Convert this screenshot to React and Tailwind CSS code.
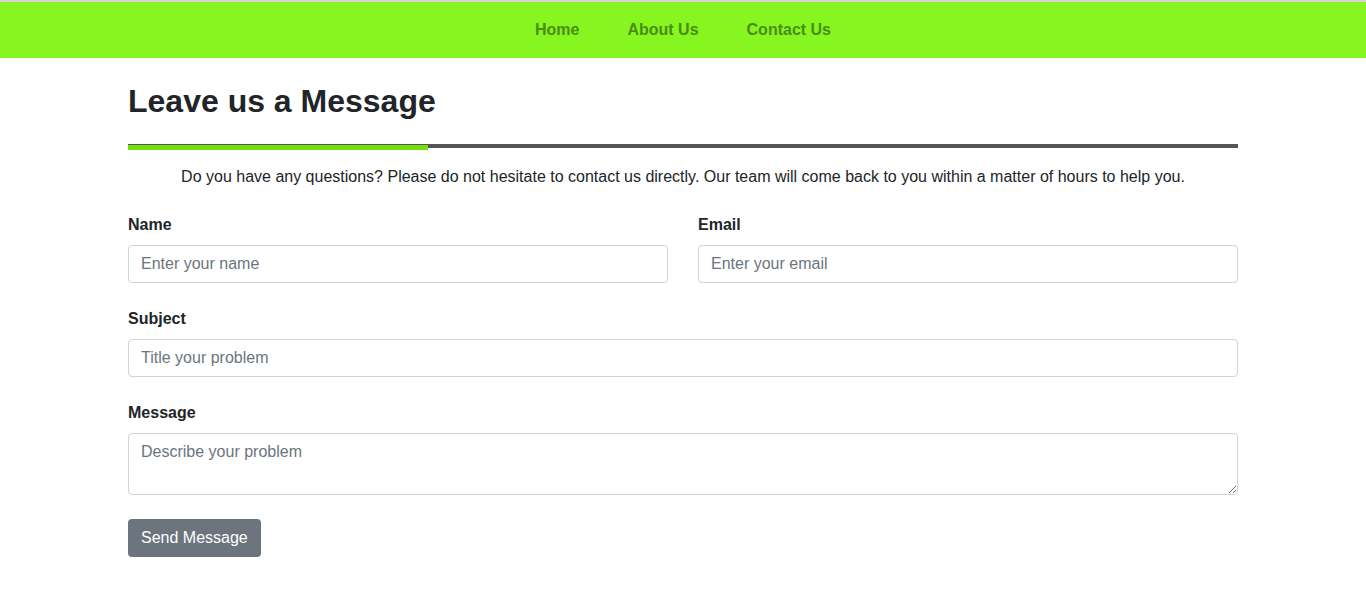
export default function App() {
  const font = { fontFamily: '"Liberation Sans", Arial, sans-serif' };
  return (
    <div className="min-h-[602px] bg-white text-[#212529]" style={font}>
      <div className="h-[2px] bg-[#d6d6d6]" />
      <nav className="h-[56px] bg-[#86f520] flex items-center justify-center">
        <a className="px-6 text-[16px] font-bold text-[#4b8c12]">Home</a>
        <a className="px-6 text-[16px] font-bold text-[#4b8c12]">About Us</a>
        <a className="px-6 text-[16px] font-bold text-[#4b8c12]">Contact Us</a>
      </nav>
      <main className="w-[1110px] mx-auto">
        <h1 className="mt-[24px] text-[32px] leading-[38px] font-bold text-[#212529]">Leave us a Message</h1>
        <div className="mt-[24px]">
          <div className="h-[4px] bg-[#555555]" />
          <div className="relative -mt-[3px] h-[5px] w-[300px] bg-[#74e00e]" />
        </div>
        <p className="mt-[15px] text-center text-[16px] leading-[24px]">
          Do you have any questions? Please do not hesitate to contact us directly. Our team will come back to you within a matter of hours to help you.
        </p>
        <form className="mt-[24px]">
          <div className="grid grid-cols-2 gap-[30px]">
            <div>
              <label className="block text-[16px] leading-[24px] font-bold mb-[8px]">Name</label>
              <input
                className="block w-full h-[38px] px-3 border border-[#ced4da] rounded-[4px] text-[16px] placeholder:text-[#6c757d] outline-none"
                placeholder="Enter your name"
              />
            </div>
            <div>
              <label className="block text-[16px] leading-[24px] font-bold mb-[8px]">Email</label>
              <input
                className="block w-full h-[38px] px-3 border border-[#ced4da] rounded-[4px] text-[16px] placeholder:text-[#6c757d] outline-none"
                placeholder="Enter your email"
              />
            </div>
          </div>
          <div className="mt-[24px]">
            <label className="block text-[16px] leading-[24px] font-bold mb-[8px]">Subject</label>
            <input
              className="block w-full h-[38px] px-3 border border-[#ced4da] rounded-[4px] text-[16px] placeholder:text-[#6c757d] outline-none"
              placeholder="Title your problem"
            />
          </div>
          <div className="mt-[24px]">
            <label className="block text-[16px] leading-[24px] font-bold mb-[8px]">Message</label>
            <textarea
              className="block w-full h-[62px] px-3 py-[6px] border border-[#ced4da] rounded-[4px] text-[16px] leading-[24px] placeholder:text-[#6c757d] outline-none resize-y"
              placeholder="Describe your problem"
            />
          </div>
          <button
            type="button"
            className="mt-[24px] h-[38px] px-[13px] rounded-[4px] bg-[#6c757d] text-white text-[16px]"
          >
            Send Message
          </button>
        </form>
      </main>
    </div>
  );
}
